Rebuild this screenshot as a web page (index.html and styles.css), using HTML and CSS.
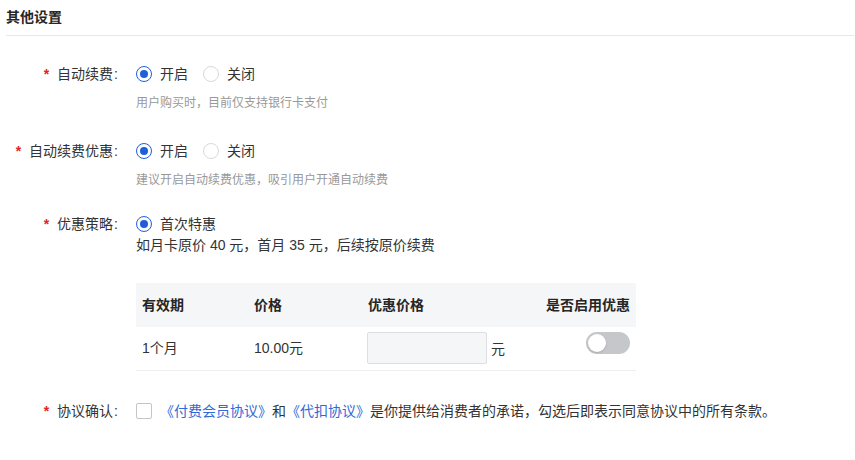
FILE: index.html
```html
<!DOCTYPE html>
<html lang="zh-CN">
<head>
<meta charset="utf-8">
<title>其他设置</title>
<link rel="stylesheet" href="styles.css">
</head>
<body>
<div class="page">
  <div class="section-title">其他设置</div>
  <div class="form">
    <div class="item item-renew">
      <div class="label"><span class="req">*</span>自动续费<span class="colon">:</span></div>
      <div class="control">
        <div class="radio-group">
          <span class="radio is-checked"><span class="radio-circle"></span><span class="radio-text">开启</span></span>
          <span class="radio"><span class="radio-circle"></span><span class="radio-text">关闭</span></span>
        </div>
        <div class="hint">用户购买时，目前仅支持银行卡支付</div>
      </div>
    </div>

    <div class="item item-discount">
      <div class="label"><span class="req">*</span>自动续费优惠<span class="colon">:</span></div>
      <div class="control">
        <div class="radio-group">
          <span class="radio is-checked"><span class="radio-circle"></span><span class="radio-text">开启</span></span>
          <span class="radio"><span class="radio-circle"></span><span class="radio-text">关闭</span></span>
        </div>
        <div class="hint">建议开启自动续费优惠，吸引用户开通自动续费</div>
      </div>
    </div>

    <div class="item item-strategy">
      <div class="label"><span class="req">*</span>优惠策略<span class="colon">:</span></div>
      <div class="control">
        <div class="radio-group">
          <span class="radio is-checked"><span class="radio-circle"></span><span class="radio-text">首次特惠</span></span>
        </div>
        <div class="desc">如月卡原价 40 元，首月 35 元，后续按原价续费</div>
        <table class="price-table">
          <thead>
            <tr>
              <th class="col-period">有效期</th>
              <th class="col-price">价格</th>
              <th class="col-discount">优惠价格</th>
              <th class="col-enable">是否启用优惠</th>
            </tr>
          </thead>
          <tbody>
            <tr>
              <td>1个月</td>
              <td>10.00元</td>
              <td><span class="input-wrap"><span class="input"></span><span class="unit">元</span></span></td>
              <td class="cell-switch"><span class="switch"><span class="switch-knob"></span></span></td>
            </tr>
          </tbody>
        </table>
      </div>
    </div>

    <div class="item item-agree">
      <div class="label"><span class="req">*</span>协议确认<span class="colon">:</span></div>
      <div class="control">
        <div class="agree-line">
          <span class="checkbox"></span>
          <span class="agree-text"><a class="link">《付费会员协议》</a>和<a class="link">《代扣协议》</a>是你提供给消费者的承诺，勾选后即表示同意协议中的所有条款。</span>
        </div>
      </div>
    </div>
  </div>
</div>
</body>
</html>
```

FILE: styles.css
```css
* {
  box-sizing: border-box;
}

html, body {
  margin: 0;
  padding: 0;
  background: #ffffff;
}

body {
  font-family: "Liberation Sans", "Noto Sans CJK SC", sans-serif;
  font-size: 14px;
  color: #333333;
}

.page {
  padding: 0 1px 0 6px;
}

.section-title {
  font-size: 14px;
  font-weight: 700;
  line-height: 20px;
  padding: 7px 0 8px 0;
  border-bottom: 1px solid #e8e8e8;
  color: #262626;
}

.form {
  padding-top: 27px;
}

.item {
  display: flex;
  align-items: flex-start;
}

.item-renew {
  margin-bottom: 28px;
}

.item-discount {
  margin-bottom: 24px;
}

.item-strategy {
  margin-bottom: 29px;
}

.label {
  width: 112px;
  flex: none;
  text-align: right;
  line-height: 22px;
  white-space: nowrap;
  color: #333333;
}

.req {
  color: #e02424;
  margin-right: 8px;
  font-size: 14px;
  font-weight: 700;
}

.colon {
  margin-left: 1px;
}

.control {
  margin-left: 18px;
  flex: 1;
}

.radio-group {
  display: flex;
  align-items: center;
  height: 22px;
}

.radio {
  display: inline-flex;
  align-items: center;
  margin-right: 15px;
  line-height: 22px;
}

.radio-circle {
  width: 16px;
  height: 16px;
  border-radius: 50%;
  border: 1px solid #d9d9d9;
  background: #fff;
  display: inline-flex;
  align-items: center;
  justify-content: center;
  margin-right: 8px;
}

.radio.is-checked .radio-circle {
  border-color: #1f5fd8;
}

.radio.is-checked .radio-circle::after {
  content: "";
  width: 8px;
  height: 8px;
  border-radius: 50%;
  background: #1f5fd8;
}

.hint {
  margin-top: 9px;
  font-size: 12px;
  line-height: 18px;
  color: #999999;
}

.desc {
  line-height: 20px;
  color: #333333;
}

.price-table {
  margin-top: 28px;
  width: 500px;
  border-collapse: collapse;
  table-layout: fixed;
}

.price-table th {
  height: 44px;
  padding: 0 6px;
  background: #f5f6f7;
  font-weight: 700;
  text-align: left;
  color: #262626;
  line-height: 20px;
}

.price-table .col-period {
  width: 112px;
}

.price-table .col-price {
  width: 114px;
}

.price-table .col-discount {
  width: 160px;
}

.price-table .col-enable {
  text-align: right;
}

.price-table td {
  padding: 5px 6px 6px 6px;
  border-bottom: 1px solid #eeeeee;
  line-height: 20px;
  vertical-align: middle;
  color: #333333;
}

.price-table td.cell-switch {
  text-align: right;
  vertical-align: top;
}

.input-wrap {
  display: flex;
  align-items: center;
  margin-left: -1px;
}

.input {
  display: block;
  width: 120px;
  height: 32px;
  background: #f5f6f7;
  border: 1px solid #dcdee2;
  border-radius: 2px;
  flex: none;
}

.unit {
  margin-left: 4px;
  padding-top: 2px;
}

.switch {
  display: inline-block;
  position: relative;
  width: 44px;
  height: 22px;
  border-radius: 11px;
  background: #c6c7ca;
  vertical-align: top;
}

.switch-knob {
  position: absolute;
  left: 2px;
  top: 2px;
  width: 18px;
  height: 18px;
  border-radius: 50%;
  background: #ffffff;
  box-shadow: 0 1px 2px rgba(0, 0, 0, 0.15);
}

.agree-line {
  display: flex;
  align-items: center;
  height: 22px;
}

.checkbox {
  width: 16px;
  height: 16px;
  border: 1px solid #c4c5c8;
  border-radius: 2px;
  background: #fff;
  flex: none;
  margin-right: 8px;
}

.agree-text {
  line-height: 22px;
  white-space: nowrap;
}

.link {
  color: #2e6ad8;
  text-decoration: none;
  cursor: pointer;
}
```
